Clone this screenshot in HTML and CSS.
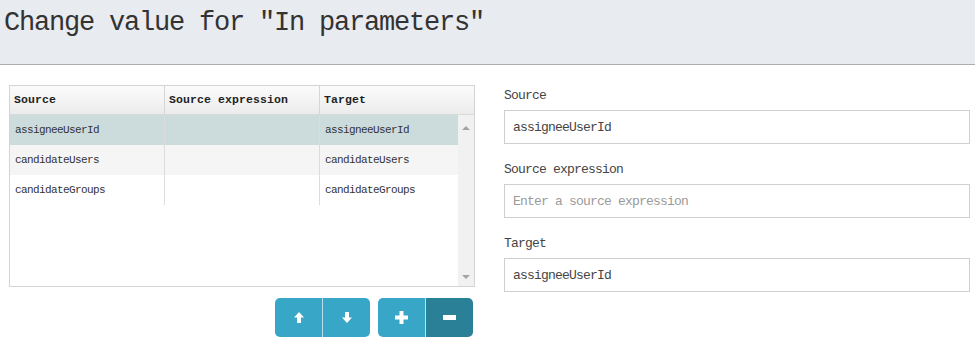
FILE: index.html
```html
<!DOCTYPE html>
<html>
<head>
<meta charset="utf-8">
<link rel="stylesheet" href="styles.css">
</head>
<body>
<div class="modal-header">
  <h2 class="title">Change value for "In parameters"</h2>
</div>
<div class="modal-body">
  <div class="left">
    <div class="grid">
      <div class="grid-head">
        <div class="hcell">Source</div>
        <div class="hcell">Source expression</div>
        <div class="hcell last">Target</div>
      </div>
      <div class="grid-body">
        <div class="rows">
          <div class="row selected">
            <div class="cell">assigneeUserId</div>
            <div class="cell"></div>
            <div class="cell last">assigneeUserId</div>
          </div>
          <div class="row alt">
            <div class="cell">candidateUsers</div>
            <div class="cell"></div>
            <div class="cell last">candidateUsers</div>
          </div>
          <div class="row">
            <div class="cell">candidateGroups</div>
            <div class="cell"></div>
            <div class="cell last">candidateGroups</div>
          </div>
        </div>
        <div class="scrollbar">
          <span class="arrow up"></span>
          <span class="arrow down"></span>
        </div>
      </div>
    </div>
    <div class="actions">
      <div class="btn-group">
        <button class="btn"><svg width="10" height="11" viewBox="0 0 10 11"><path d="M5 0 L10 5.5 H7 V11 H3 V5.5 H0 Z" fill="#fff"/></svg></button>
        <button class="btn"><svg width="10" height="11" viewBox="0 0 10 11"><path d="M5 11 L10 5.5 H7 V0 H3 V5.5 H0 Z" fill="#fff"/></svg></button>
      </div>
      <div class="btn-group">
        <button class="btn"><svg width="13" height="13" viewBox="0 0 13 13"><path d="M4.5 0 H8.5 V4.5 H13 V8.5 H8.5 V13 H4.5 V8.5 H0 V4.5 H4.5 Z" fill="#fff"/></svg></button>
        <button class="btn dark"><svg width="13" height="5" viewBox="0 0 13 5"><rect width="13" height="5" fill="#fff"/></svg></button>
      </div>
    </div>
  </div>
  <div class="right">
    <label class="lbl">Source</label>
    <input class="field" type="text" value="assigneeUserId">
    <label class="lbl">Source expression</label>
    <input class="field" type="text" placeholder="Enter a source expression">
    <label class="lbl">Target</label>
    <input class="field" type="text" value="assigneeUserId">
  </div>
</div>
</body>
</html>
```
FILE: styles.css
```css
* { box-sizing: border-box; }
body {
  margin: 0;
  background: #fff;
  font-family: "Liberation Mono", "DejaVu Sans Mono", monospace;
  color: #333;
}
.modal-header {
  height: 65px;
  background: #e8ebef;
  border-bottom: 1px solid #adadad;
  padding: 6px 0 0 4px;
}
.title {
  margin: 0;
  font-weight: normal;
  font-size: 27px;
  letter-spacing: -1.2px;
  line-height: 34px;
  color: #333;
}
.modal-body {
  display: flex;
  padding: 20px 0 0 9px;
}
.left {
  width: 466px;
  display: flex;
  flex-direction: column;
}
.grid {
  height: 202px;
  border: 1px solid #d4d4d4;
  display: flex;
  flex-direction: column;
}
.grid-head {
  display: grid;
  grid-template-columns: 155px 155px 1fr;
  height: 29px;
  background: linear-gradient(#fbfbfb, #ececec);
  border-bottom: 1px solid #d9d9d9;
}
.hcell {
  border-right: 1px solid #d6d6d6;
  padding-left: 4px;
  font-weight: bold;
  font-size: 11.5px;
  letter-spacing: 0.1px;
  line-height: 27px;
  color: #222;
}
.hcell.last { border-right: none; }
.grid-body {
  flex: 1;
  display: flex;
}
.rows {
  flex: 1;
}
.row {
  display: grid;
  grid-template-columns: 155px 155px 1fr;
  height: 30px;
  background: #fff;
}
.row.selected { background: #ccdcdd; }
.row.alt { background: #f5f5f5; }
.cell {
  border-right: 1px solid #dcdcdc;
  padding-left: 5px;
  font-size: 11px;
  letter-spacing: -0.6px;
  line-height: 30px;
  color: #333;
}
.cell.last { border-right: none; }
.scrollbar {
  width: 16px;
  background: #f1f1f1;
  display: flex;
  flex-direction: column;
  justify-content: space-between;
  align-items: center;
  padding: 11px 0 7px;
}
.arrow {
  width: 0;
  height: 0;
  border-left: 4px solid transparent;
  border-right: 4px solid transparent;
}
.arrow.up { border-bottom: 4px solid #a3a3a3; }
.arrow.down { border-top: 4px solid #a3a3a3; }
.actions {
  display: flex;
  justify-content: flex-end;
  gap: 8px;
  margin-top: 11px;
  padding-right: 2px;
}
.btn-group {
  display: flex;
  border-radius: 5px;
  overflow: hidden;
}
.btn {
  width: 47px;
  height: 39px;
  border: none;
  padding: 0;
  margin: 0;
  background: #38a6c6;
  display: flex;
  align-items: center;
  justify-content: center;
}
.btn + .btn { border-left: 1px solid #b9e0ec; width: 48px; }
.btn.dark { background: #2a8197; }
.right {
  width: 466px;
  margin-left: 29px;
  display: flex;
  flex-direction: column;
}
.lbl {
  font-size: 13px;
  letter-spacing: -0.8px;
  line-height: 20px;
  height: 20px;
  color: #444;
  margin-top: 16px;
  margin-bottom: 4px;
}
.lbl:first-child { margin-top: 1px; }
.field {
  height: 34px;
  border: 1px solid #cfcfcf;
  padding: 0 8px;
  font-family: "Liberation Mono", "DejaVu Sans Mono", monospace;
  font-size: 13px;
  letter-spacing: -0.8px;
  color: #444;
  background: #fff;
  outline: none;
}
.field::placeholder { color: #9a9a9a; }
```
